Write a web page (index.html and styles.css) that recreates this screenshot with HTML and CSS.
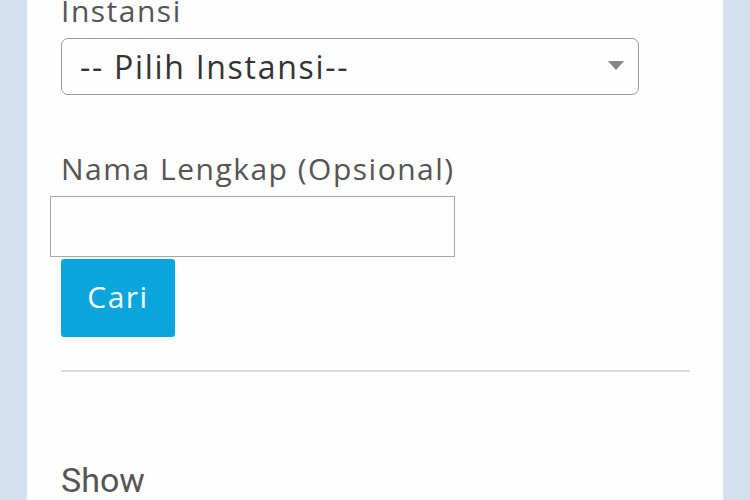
FILE: index.html
```html
<!DOCTYPE html>
<html lang="id">
<head>
<meta charset="utf-8">
<title>Cari Instansi</title>
<link rel="stylesheet" href="styles.css">
</head>
<body>
<main class="card">
  <form class="search-form">
    <label class="field-label label-first" for="instansi">Instansi</label>
    <div class="select-box" id="instansi">
      <span class="select-text">-- Pilih Instansi--</span>
      <span class="select-arrow"></span>
    </div>
    <label class="field-label label-second" for="nama">Nama Lengkap (Opsional)</label>
    <div class="text-input" id="nama"></div>
    <button type="button" class="btn-cari">Cari</button>
  </form>
  <hr class="divider">
  <div class="show-label">Show</div>
</main>
</body>
</html>
```
FILE: styles.css
```css
html, body {
  margin: 0;
  padding: 0;
  height: 100%;
  overflow: hidden;
}
body {
  background: #d5e0ee;
  font-family: "Open Sans", "Noto Sans", sans-serif;
}
.card {
  margin: 0 27px;
  background: #fdfefd;
  padding: 0 33px 0 34px;
  height: 100%;
  box-sizing: border-box;
}
.search-form {
  display: flex;
  flex-direction: column;
  align-items: flex-start;
}
.field-label {
  font-size: 30px;
  letter-spacing: 1.5px;
  line-height: 36px;
  height: 36px;
  color: #555;
  display: block;
}
.label-first {
  margin-top: -7px;
}
.label-second {
  margin-top: 56px;
}
.select-box {
  margin-top: 9px;
  width: 578px;
  height: 57px;
  box-sizing: border-box;
  border: 1.5px solid #9a9a9a;
  border-radius: 7px;
  display: flex;
  align-items: center;
  justify-content: space-between;
  padding: 0 14px 0 18px;
  background: #fdfefd;
}
.select-text {
  font-size: 32px;
  letter-spacing: 1.7px;
  color: #333;
}
.select-arrow {
  width: 0;
  height: 0;
  border-left: 8px solid transparent;
  border-right: 8px solid transparent;
  border-top: 9px solid #858585;
  margin-top: -2px;
}
.text-input {
  margin-top: 9px;
  margin-left: -11px;
  width: 405px;
  height: 61px;
  box-sizing: border-box;
  border: 1px solid #a8a8a8;
  background: #fefefe;
}
.btn-cari {
  margin-top: 2px;
  width: 114px;
  height: 78px;
  border: none;
  border-radius: 3px;
  background: #0aa5dc;
  color: #fff;
  font-family: "Open Sans", "Noto Sans", sans-serif;
  font-size: 30px;
  letter-spacing: 1.5px;
  padding: 0 0 4px;
}
.divider {
  margin: 33px 0 0;
  border: none;
  height: 2px;
  background: #dcdcdc;
}
.show-label {
  margin-top: 88px;
  font-family: Roboto, sans-serif;
  font-size: 34px;
  line-height: 40px;
  color: #555;
}
```
